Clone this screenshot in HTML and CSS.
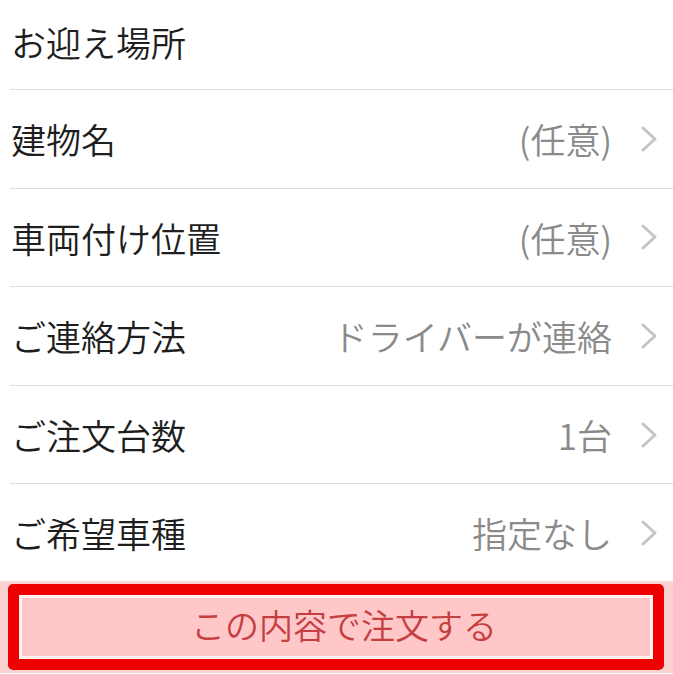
FILE: index.html
```html
<!DOCTYPE html>
<html lang="ja">
<head>
    <meta charset="UTF-8">
    <meta name="viewport" content="width=device-width, initial-scale=1.0">
    <title>ご注文内容</title>
    <link rel="stylesheet" href="styles.css">
</head>
<body>
    <ul class="list">
        <li class="row row-first">
            <span class="label">お迎え場所</span>
        </li>
        <li class="row">
            <span class="label">建物名</span>
            <span class="value">(任意)</span>
            <svg class="chevron" viewBox="0 0 16 26"><polyline points="2,2 14,13 2,24"/></svg>
        </li>
        <li class="row">
            <span class="label">車両付け位置</span>
            <span class="value">(任意)</span>
            <svg class="chevron" viewBox="0 0 16 26"><polyline points="2,2 14,13 2,24"/></svg>
        </li>
        <li class="row">
            <span class="label">ご連絡方法</span>
            <span class="value">ドライバーが連絡</span>
            <svg class="chevron" viewBox="0 0 16 26"><polyline points="2,2 14,13 2,24"/></svg>
        </li>
        <li class="row">
            <span class="label">ご注文台数</span>
            <span class="value">1台</span>
            <svg class="chevron" viewBox="0 0 16 26"><polyline points="2,2 14,13 2,24"/></svg>
        </li>
        <li class="row row-last">
            <span class="label">ご希望車種</span>
            <span class="value">指定なし</span>
            <svg class="chevron" viewBox="0 0 16 26"><polyline points="2,2 14,13 2,24"/></svg>
        </li>
    </ul>

    <div class="footer">
        <!-- 赤枠は注釈 -->
        <div class="highlight">
            <button type="button" class="btn">この内容で注文する</button>
        </div>
    </div>
</body>
</html>
```

FILE: styles.css
```css
* {
    margin: 0;
    padding: 0;
    box-sizing: border-box;
}

body {
    font-family: "Noto Sans CJK JP", "Noto Sans", sans-serif;
    font-weight: 350;
    background-color: #fff;
    width: 673px;
    height: 674px;
    overflow: hidden;
}

.list {
    list-style: none;
    padding-left: 10px;
}

.row {
    display: flex;
    align-items: center;
    height: 98.6px;
    padding-right: 16px;
    border-bottom: 1px solid #dcdcdc;
    font-size: 35px;
}

.row-first {
    height: 90px;
    padding-bottom: 6px;
}

.row-last {
    border-bottom: none;
    height: 97px;
}

.label {
    flex: 1;
    color: #1e1e1e;
    padding-left: 1px;
}

.value {
    color: #8a8a8a;
}

.chevron {
    width: 16px;
    height: 26px;
    margin-left: 29px;
    fill: none;
    stroke: #c4c4c4;
    stroke-width: 3;
    stroke-linecap: round;
    stroke-linejoin: round;
}

.footer {
    background-color: #fbd2d2;
    border-top: 1px solid #f3dcdc;
    padding: 2px 9px 4px 8px;
    height: 92px;
}

.highlight {
    border: 11px solid #ee0000;
    border-radius: 5px;
    height: 86px;
}

.btn {
    width: 100%;
    height: 100%;
    border: 3px solid #fff2f2;
    background-color: #ffc7c7;
    color: #c43e42;
    font-family: inherit;
    font-weight: 350;
    font-size: 34px;
    padding: 0 0 6px 16px;
}
```
